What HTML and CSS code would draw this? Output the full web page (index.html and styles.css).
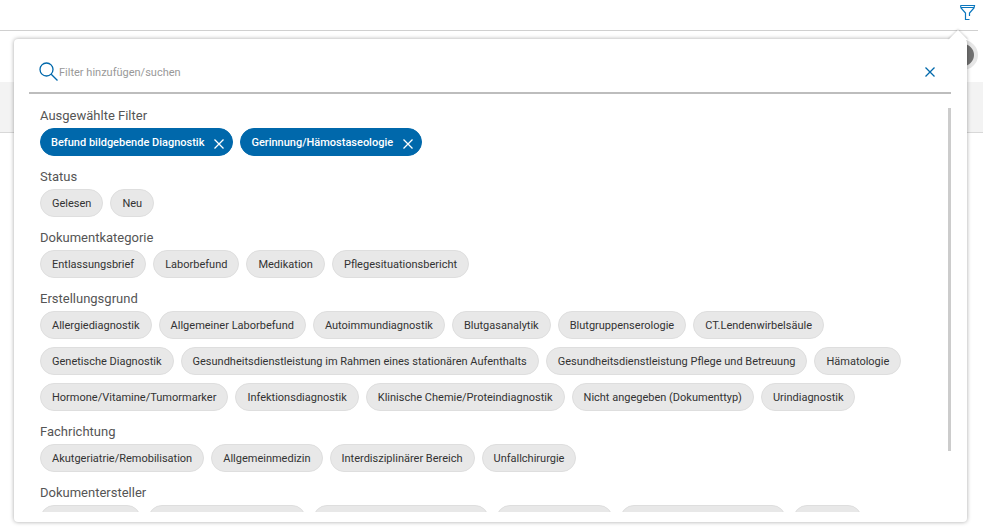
FILE: index.html
```
<!DOCTYPE html>
<html lang="de">
<head>
    <meta charset="UTF-8">
    <title>Dokumente filtern</title>
    <link rel="stylesheet" href="styles.css">
</head>
<body>
    <header class="toolbar">
        <button class="icon-button" type="button" aria-label="Filter">
            <svg width="17" height="17" viewBox="0 0 17 17">
                <path d="M1.500 1.500h14L15 4l-4.500 5v3M10.500 15.500h-4V9L2 4l-.5-2.500M6.500 15.500h4M2 3.500h13"/>
            </svg>
        </button>
    </header>
    <div class="actions">
        <span class="avatar"></span>
    </div>
    <div class="band"></div>

    <section class="filter-panel">
        <div class="search">
            <svg class="search-icon" width="20" height="20" viewBox="0 0 20 20">
                <circle cx="7.500" cy="7.500" r="6.500"/>
                <path d="M12.200 12.200L18.500 18.500"/>
            </svg>
            <input class="search-input" type="text" placeholder="Filter hinzufügen/suchen" aria-label="Filter hinzufügen/suchen">
            <button class="icon-button" type="button" aria-label="Schließen">
                <svg width="10" height="10" viewBox="0 0 10 10">
                    <path d="M.5.5l9 9M9.500.5l-9 9"/>
                </svg>
            </button>
        </div>

        <div class="scroll-area">
            <div class="groups">
                <div class="group">
                    <h2>Ausgewählte Filter</h2>
                    <div class="chips">
                        <button class="chip selected" type="button">Befund bildgebende Diagnostik
                            <svg width="10" height="10" viewBox="0 0 10 10"><path d="M.5.5l9 9M9.500.5l-9 9"/></svg>
                        </button>
                        <button class="chip selected" type="button">Gerinnung/Hämostaseologie
                            <svg width="10" height="10" viewBox="0 0 10 10"><path d="M.5.5l9 9M9.500.5l-9 9"/></svg>
                        </button>
                    </div>
                </div>
                <div class="group">
                    <h2>Status</h2>
                    <div class="chips">
                        <button class="chip" type="button">Gelesen</button>
                        <button class="chip" type="button">Neu</button>
                    </div>
                </div>
                <div class="group">
                    <h2>Dokumentkategorie</h2>
                    <div class="chips">
                        <button class="chip" type="button">Entlassungsbrief</button>
                        <button class="chip" type="button">Laborbefund</button>
                        <button class="chip" type="button">Medikation</button>
                        <button class="chip" type="button">Pflegesituationsbericht</button>
                    </div>
                </div>
                <div class="group">
                    <h2>Erstellungsgrund</h2>
                    <div class="chips">
                        <button class="chip" type="button">Allergiediagnostik</button>
                        <button class="chip" type="button">Allgemeiner Laborbefund</button>
                        <button class="chip" type="button">Autoimmundiagnostik</button>
                        <button class="chip" type="button">Blutgasanalytik</button>
                        <button class="chip" type="button">Blutgruppenserologie</button>
                        <button class="chip" type="button">CT.Lendenwirbelsäule</button>
                        <button class="chip" type="button">Genetische Diagnostik</button>
                        <button class="chip" type="button">Gesundheitsdienstleistung im Rahmen eines stationären Aufenthalts</button>
                        <button class="chip" type="button">Gesundheitsdienstleistung Pflege und Betreuung</button>
                        <button class="chip" type="button">Hämatologie</button>
                        <button class="chip" type="button">Hormone/Vitamine/Tumormarker</button>
                        <button class="chip" type="button">Infektionsdiagnostik</button>
                        <button class="chip" type="button">Klinische Chemie/Proteindiagnostik</button>
                        <button class="chip" type="button">Nicht angegeben (Dokumenttyp)</button>
                        <button class="chip" type="button">Urindiagnostik</button>
                    </div>
                </div>
                <div class="group">
                    <h2>Fachrichtung</h2>
                    <div class="chips">
                        <button class="chip" type="button">Akutgeriatrie/Remobilisation</button>
                        <button class="chip" type="button">Allgemeinmedizin</button>
                        <button class="chip" type="button">Interdisziplinärer Bereich</button>
                        <button class="chip" type="button">Unfallchirurgie</button>
                    </div>
                </div>
                <div class="group">
                    <h2>Dokumentersteller</h2>
                    <div class="chips">
                        <button class="chip chip-s" type="button"></button>
                        <button class="chip chip-l" type="button"></button>
                        <button class="chip chip-xxl" type="button"></button>
                        <button class="chip chip-m" type="button"></button>
                        <button class="chip chip-xl" type="button"></button>
                        <button class="chip chip-xs" type="button"></button>
                    </div>
                </div>
            </div>
            <div class="scrollbar"><div class="thumb"></div></div>
        </div>
    </section>
</body>
</html>
```
FILE: styles.css
```
* {
    box-sizing: border-box;
}

body {
    margin: 0;
    min-height: 100vh;
    background: #fff;
    font-family: Roboto, sans-serif;
    color: #333;
    overflow: hidden;
}

svg {
    display: block;
    flex: none;
    fill: none;
    stroke: #0068ab;
    stroke-width: 1.3;
}

.icon-button {
    display: block;
    padding: 0;
    border: 0;
    background: none;
    cursor: pointer;
}

.toolbar {
    display: flex;
    justify-content: flex-end;
    height: 31px;
    margin-right: 5px;
    padding: 4px 2px 0 0;
    border-bottom: 1px solid #d0d0d0;
}

.toolbar .icon-button {
    height: 17px;
}

.toolbar svg {
    stroke: #0a76bd;
    stroke-width: 1.2;
}

.actions {
    display: flex;
    justify-content: flex-end;
    height: 51px;
    padding: 9px 5px 0 0;
}

.avatar {
    width: 30px;
    height: 30px;
    border: 4px solid #e6e6e6;
    border-radius: 50%;
    background: #707070;
}

.band {
    height: 51px;
    background: #f3f3f3;
    border-bottom: 1px solid #d8d8d8;
}

.filter-panel {
    position: absolute;
    top: 39px;
    left: 14px;
    right: 16px;
    padding: 13px 16px 10px 15px;
    background: #fff;
    border-radius: 4px;
    box-shadow: 0 0 4px rgba(0, 0, 0, 0.35);
}

/* arrow pointing at the filter icon */
.filter-panel::before {
    content: '';
    position: absolute;
    top: -6px;
    right: 2px;
    width: 14px;
    height: 14px;
    background: #fff;
    box-shadow: -1px -1px 2px rgba(0, 0, 0, 0.15);
    transform: rotate(45deg);
    clip-path: polygon(-4px -4px, 18px -4px, -4px 18px);
}

.search {
    display: flex;
    align-items: center;
    height: 42px;
    padding: 0 16px 0 10px;
    border-bottom: 2px solid #bdbdbd;
}

.search-input {
    flex: 1;
    min-width: 0;
    height: 24px;
    padding: 0;
    border: 0;
    outline: 0;
    background: none;
    font: 11px Roboto, sans-serif;
}

.search-input::placeholder {
    color: #999;
}

.scroll-area {
    display: flex;
    height: calc(100vh - 125px);
    margin-top: 12px;
    padding-left: 11px;
    overflow: hidden;
}

.groups {
    flex: 1;
}

.group {
    margin-bottom: 11px;
}

h2 {
    margin: 0 0 2px;
    font-size: 13px;
    font-weight: 400;
    line-height: 20px;
    color: #555;
}

.chips {
    display: flex;
    flex-wrap: wrap;
    gap: 8px 7px;
}

.chip {
    height: 28px;
    padding: 0 11px;
    border: 1px solid #dedede;
    border-radius: 14px;
    background: #e8e8e8;
    font: 11px Roboto, sans-serif;
    color: #333;
    white-space: nowrap;
    cursor: pointer;
}

.chip.selected {
    display: flex;
    align-items: center;
    gap: 10px;
    padding: 0 8px 0 10px;
    border-color: #0068ab;
    background: #0068ab;
    font-weight: 500;
    color: #fff;
}

.chip.selected svg {
    margin-top: 4px;
    stroke: #fff;
}

.chip-xs { width: 69px; }
.chip-s { width: 101px; }
.chip-m { width: 117px; }
.chip-l { width: 158px; }
.chip-xl { width: 166px; }
.chip-xxl { width: 176px; }

.scrollbar {
    width: 3px;
    padding-top: 2px;
}

.thumb {
    height: 85%;
    background: #ccc;
}
```
